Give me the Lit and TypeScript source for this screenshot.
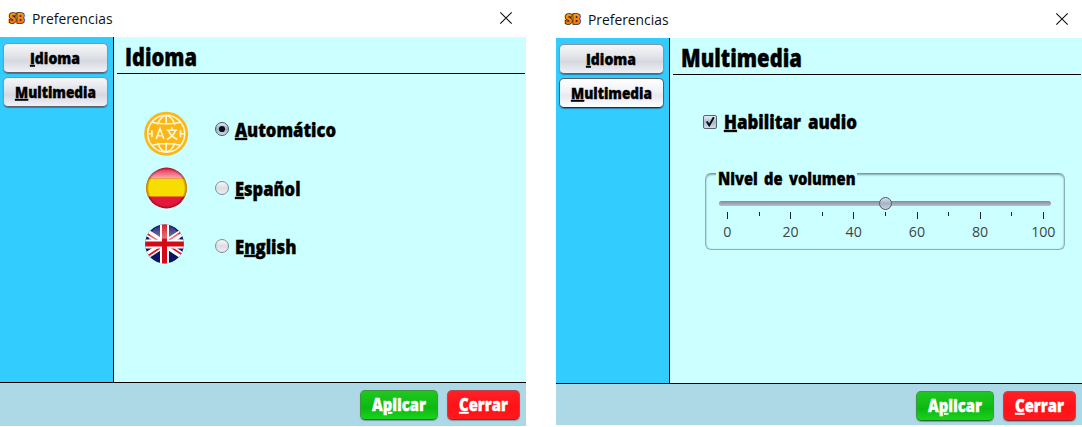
import { LitElement, html, svg, css } from "lit";
import { customElement, property } from "lit/decorators.js";

/** Heavy label fitted to a fixed width, with one underlined mnemonic letter. */
@customElement("fit-label")
class FitLabel extends LitElement {
  @property() text = "";
  @property({ type: Number }) key = -1;
  @property({ type: Number }) width = 50;
  @property({ type: Number }) size = 17;

  static styles = css`
    :host { display: block; flex: none; }
    svg { display: block; overflow: visible; }
    text {
      font-family: "Open Sans", sans-serif;
      font-weight: 800;
      fill: currentColor;
      stroke: currentColor;
      stroke-width: 0.4px;
      word-spacing: 3px;
      white-space: pre;
    }
    .key {
      text-decoration: underline;
      text-decoration-thickness: 0.6px;
      text-underline-offset: 1.2px;
      text-decoration-skip-ink: none;
    }
  `;

  render() {
    const k = this.key;
    const t = this.text;
    const body = k < 0
      ? svg`${t}`
      : svg`${t.slice(0, k)}<tspan class="key">${t[k]}</tspan>${t.slice(k + 1)}`;
    return html`<svg width=${this.width} height="16">${svg`<text x="0" y="15" font-size=${this.size}
      textLength=${this.width} lengthAdjust="spacingAndGlyphs">${body}</text>`}</svg>`;
  }
}

@customElement("pref-window")
class PrefWindow extends LitElement {
  @property() page = "idioma";

  static styles = css`
    :host { display: flex; flex-direction: column; width: 526px; height: 426px; background: #fff; }
    :host([page="multimedia"]) { height: 425px; }
    .title { display: flex; align-items: flex-start; height: 37px; flex: none; }
    :host([page="multimedia"]) .title { height: 38px; }
    .title svg { display: block; width: 100%; height: 37px; overflow: visible; }
    .low { padding-top: 1px; box-sizing: border-box; }
    .name { font-family: "Open Sans", sans-serif; fill: #111; }
    .logo { font-family: "Open Sans", sans-serif; font-weight: 800; }
    .main { display: flex; height: 345px; flex: none; background: #cff; }
    .side {
      display: flex; flex-direction: column; gap: 4px; width: 114px; box-sizing: border-box;
      padding: 6px 5px 0 3px; background: #3cf; border-right: 1px solid #000;
    }
    .btn {
      display: flex; justify-content: center; box-sizing: border-box; height: 30px; width: 105px;
      border: 1px solid #8d939e; border-bottom-color: #5b626e; border-radius: 5px; padding: 5px 1px 0 0;
      background: linear-gradient(#f6f7f9, #e0e2e8 45%, #d6d8df 60%, #eff1f7);
      box-shadow: 0 1px 1px #2a80ac;
    }
    .btn.on {
      border-color: #55606e; border-bottom-color: #252c38;
      background: linear-gradient(#fff, #f1f2f7 45%, #e8e9f0 60%, #fff);
    }
    .pane { display: flex; flex-direction: column; flex: 1; }
    .head {
      display: flex; height: 36px; box-sizing: content-box; border-bottom: 1px solid #000;
      margin: 0 1px 0 3px; padding-left: 8px;
    }
    .head fit-label { margin-top: 14px; }
    .langs { padding: 26px 0 0 30px; }
    .row { display: flex; align-items: center; }
    .row .icon { width: 44px; height: 44px; overflow: visible; flex: none; }
    .radio { width: 14px; height: 14px; margin: 0 6px 0 27px; overflow: visible; flex: none; }
    .row fit-label { padding-top: 1px; margin-left: -0.5px; }
    .check { display: flex; align-items: center; padding: 39px 0 0 33px; }
    .box { width: 14px; height: 14px; overflow: visible; margin-right: 6.5px; }
    .group { display: grid; margin: 42px 0 0 35px; width: 360px; height: 79px; }
    .group > * { grid-area: 1 / 1; }
    .frame {
      border: 1px solid #8fb0b3; border-top-color: #789a9d; border-radius: 6px; margin-top: 1px; height: 75px;
      box-shadow: inset 0 2px 2px -1px #86a9ad, inset 1px 0 2px -1px #86a9ad, inset -1px 0 2px -1px #86a9ad;
    }
    .legend { background: #cff; width: 141px; height: 16px; margin-left: 11px; padding-left: 2px; box-sizing: border-box; margin-top: -2px; }
    .scale { width: 360px; height: 77px; overflow: visible; }
    .scale text { font: 14.2px "Open Sans", sans-serif; fill: #3c4546; text-anchor: middle; }
    .foot {
      display: flex; flex: 1; box-sizing: border-box; justify-content: flex-end; gap: 9px; padding: 7px 6px 0 0;
      background: #add8e6; border-top: 1px solid #000; color: #fff;
    }
    .act {
      display: flex; justify-content: center; box-sizing: border-box; height: 30px; width: 78px;
      border: 1px solid #43943f; border-bottom-color: #24702a; border-radius: 5px; padding-top: 5px;
      background: linear-gradient(#20c620, #10be14 45%, #0db711 60%, #18d51c);
      box-shadow: 0 1px 1px #7c9da9;
    }
    .act.red { width: 73px; border-color: #b34a50; border-bottom-color: #8c2f35; background: linear-gradient(#ff2026, #ff1218 55%, #ff191c); }
  `;

  private flag(kind: number) {
    if (kind === 0) {
      return svg`<g transform="translate(22.2 4.7)" fill="none" stroke="#fff6d4" stroke-width="1.5">
        <circle r="22" fill="#fcb716" stroke="none"/>
        <circle r="18.5" stroke-width="1.6"/>
        <ellipse rx="10" ry="18"/>
        <path d="M0-18V18M-18 0H18M-14.5-11.5Q0-8 14.5-11.5M-14.5 11.5Q0 8 14.5 11.5"/>
        <rect x="-12.6" y="-8.2" width="25.2" height="16.4" rx="2" fill="#fcb716" stroke="#fcb716"/>
        <path d="M-14.3-3.5v7M14.3-3.5v7" stroke-width="1.7"/>
        <path d="M-10 5.4L-6.2-5.2-2.4 5.4M-8.8 2H-3.6M.4-3.4H11M5.7-6.4V-3.4M9.2-3.4Q7.4 2.8.8 5.8M2.2-3.4Q4.4 2.8 11.2 5.8" stroke-width="1.6"/>
      </g>`;
    }
    if (kind === 1) {
      return svg`<defs><clipPath id="es"><circle cx="22.5" cy="0" r="20.4"/></clipPath>
        <linearGradient id="glow" x1="0" y1="0" x2="0" y2="1"><stop offset="0" stop-color="#fff" stop-opacity=".08"/><stop offset="1" stop-color="#fff" stop-opacity=".65"/></linearGradient>
        <radialGradient id="rim"><stop offset=".86" stop-color="#500" stop-opacity="0"/><stop offset="1" stop-color="#500" stop-opacity=".5"/></radialGradient></defs>
        <g clip-path="url(#es)"><rect x="2" y="-21" width="42" height="42" fill="#e4173c"/>
        <rect x="5" y="-20" width="35" height="10.5" fill="url(#glow)"/>
        <rect x="2" y="-9.5" width="42" height="18" fill="#f8dd00"/>
        <circle cx="22.5" cy="0" r="20.4" fill="url(#rim)"/></g>`;
    }
    return svg`<defs><clipPath id="uk"><circle r="19.4"/></clipPath>
      <linearGradient id="gl2" x1="0" y1="0" x2="0" y2="1"><stop offset="0" stop-color="#fff" stop-opacity=".1"/><stop offset="1" stop-color="#fff" stop-opacity=".5"/></linearGradient></defs>
      <g transform="translate(20.5 -2)"><g clip-path="url(#uk)">
      <rect x="-20" y="-20" width="40" height="40" fill="#0b1466"/>
      <path d="M-26-17L26 17M-26 17L26-17" stroke="#fff" stroke-width="6.5"/>
      <path d="M-26-16L0 1M26 16L0-1M-26 18L0 1M26-18L0-1" stroke="#dd1522" stroke-width="1.8"/>
      <path d="M0-20V20M-20 0H20" stroke="#fff" stroke-width="9"/>
      <path d="M0-20V20M-20 0H20" stroke="#d40a18" stroke-width="5"/>
      <path d="M-16-3Q-14-18 0-19 14-18 16-3 0-8-16-3Z" fill="url(#gl2)"/>
      </g></g>`;
  }

  private languages() {
    const rows = [
      { text: "Automático", key: 0, w: 101, h: 58 },
      { text: "Español", key: 0, w: 65.5, h: 60 },
      { text: "English", key: 1, w: 61.5, h: 56 },
    ];
    return html`<div class="langs">${rows.map((r, i) => html`
      <div class="row" style="height:${r.h}px">
        <svg class="icon" viewBox="0 -22 44 44">${this.flag(i)}</svg>
        <svg class="radio" viewBox="-7 -7 14 14">
          <defs><linearGradient id="dot${i}" x1="0" y1="0" x2="0" y2="1">
            <stop offset="0" stop-color=${i ? "#fafafc" : "#e8f0f8"}/><stop offset=".5" stop-color=${i ? "#dcdee5" : "#9fb0c3"}/><stop offset="1" stop-color=${i ? "#eceef4" : "#cfdfef"}/></linearGradient></defs>
          <circle r="6.5" fill="url(#dot${i})" stroke=${i ? "#858b95" : "#4b5a6e"}/>
          ${i ? "" : svg`<circle r="3.1" fill="#0c1014"/>`}
        </svg>
        <fit-label .text=${r.text} .key=${r.key} .width=${r.w} .size=${19.5}></fit-label>
      </div>`)}</div>`;
  }

  private multimedia() {
    const ticks = Array.from({ length: 11 }, (_, i) => i);
    return html`
      <div class="check">
        <svg class="box" viewBox="0 0 14 14">
          <defs><linearGradient id="c" x1="0" y1="0" x2="0" y2="1"><stop offset="0" stop-color="#eef3f9"/><stop offset=".5" stop-color="#a9b8ca"/><stop offset="1" stop-color="#d2e0ef"/></linearGradient></defs>
          <rect x=".5" y=".5" width="13" height="13" rx="1.5" fill="url(#c)" stroke="#566375"/>
          <path d="M3.8 6.6L6.2 10.4 10.8 2.2" fill="none" stroke="#0a0a0a" stroke-width="1.9"/>
        </svg>
        <fit-label text="Habilitar audio" .key=${0} .width=${133} .size=${19.5}></fit-label>
      </div>
      <div class="group">
        <div class="frame"></div>
        <div class="legend"><fit-label text="Nivel de volumen" .width=${137.5} .size=${18}></fit-label></div>
        <svg class="scale" viewBox="705 172 360 77">
          <defs>
            <linearGradient id="t" x1="0" y1="0" x2="0" y2="1"><stop offset="0" stop-color="#828b98"/><stop offset="1" stop-color="#b7c1cc"/></linearGradient>
            <linearGradient id="k" x1="0" y1="0" x2="0" y2="1"><stop offset="0" stop-color="#dce5ef"/><stop offset=".5" stop-color="#a5b2c3"/><stop offset="1" stop-color="#c8d8e8"/></linearGradient>
          </defs>
          <rect x="719" y="201" width="332" height="5" rx="2.5" fill="url(#t)"/>
          ${ticks.map((i) => svg`
            <rect x=${Math.round(727 + i * 31.6)} y="212" width="1" height=${i % 2 ? 4 : 7} fill="#18282a"/>
            ${i % 2 ? "" : svg`<text x=${727.3 + i * 31.6} y="237">${i * 10}</text>`}`)}
          <circle cx="885.5" cy="203.5" r="6" fill="url(#k)" stroke="#4d5a6c"/>
        </svg>
      </div>`;
  }

  render() {
    const multi = this.page === "multimedia";
    return html`
      <div class="title ${multi ? "low" : ""}">
        <svg viewBox="0 0 526 37">
          <defs><linearGradient id="o" x1="0" y1="0" x2="0" y2="1"><stop offset="0" stop-color="#ffa51e"/><stop offset="1" stop-color="#f06a10"/></linearGradient></defs>
          <text class="logo" x="9" y="22.5" font-size="13.5" textLength="15.5" lengthAdjust="spacingAndGlyphs"
            fill="url(#o)" stroke="#32190a" stroke-width="1.7" paint-order="stroke">SB</text>
          <text class="name" x="32" y="24" font-size="14.5" textLength="80.5" lengthAdjust="spacingAndGlyphs">Preferencias</text>
          <path d="M500.3 12.3L511.7 23.7M511.7 12.3L500.3 23.7" stroke="#111" stroke-width="1.1"/>
        </svg>
      </div>
      <div class="main">
        <div class="side">
          <div class="btn"><fit-label text="Idioma" .key=${0} .width=${50} .size=${16.5}></fit-label></div>
          <div class="btn ${multi ? "on" : ""}"><fit-label text="Multimedia" .key=${0} .width=${81} .size=${16.5}></fit-label></div>
        </div>
        <div class="pane">
          <div class="head">
            <fit-label .text=${multi ? "Multimedia" : "Idioma"} .width=${multi ? 121 : 72} .size=${24.5}></fit-label>
          </div>
          ${multi ? this.multimedia() : this.languages()}
        </div>
      </div>
      <div class="foot">
        <div class="act"><fit-label text="Aplicar" .key=${1} .width=${54} .size=${17}></fit-label></div>
        <div class="act red"><fit-label text="Cerrar" .key=${0} .width=${49} .size=${17}></fit-label></div>
      </div>`;
  }
}

@customElement("app-root")
class AppRoot extends LitElement {
  static styles = css`
    :host { display: flex; gap: 30px; align-items: flex-start; width: 1082px; height: 427px; background: #fff; overflow: hidden; }
  `;
  render() {
    return html`<pref-window page="idioma"></pref-window><pref-window page="multimedia"></pref-window>`;
  }
}
